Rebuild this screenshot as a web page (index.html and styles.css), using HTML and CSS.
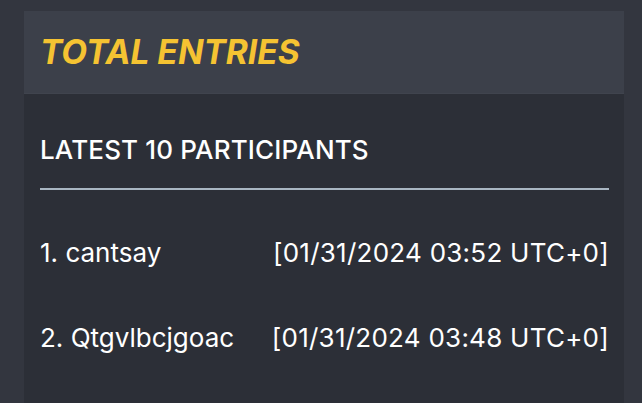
FILE: index.html
```html
<!DOCTYPE html>
<html lang="en">
<head>
    <meta charset="UTF-8">
    <meta name="viewport" content="width=device-width, initial-scale=1.0">
    <title>Total Entries</title>
    <link rel="stylesheet" href="styles.css">
</head>
<body>
    <div class="card">
        <div class="card-header">
            <h1 class="title">TOTAL ENTRIES</h1>
        </div>
        <div class="card-body">
            <h2 class="subtitle">LATEST 10 PARTICIPANTS</h2>
            <ul class="entries">
                <li class="entry">
                    <span class="name">1. cantsay</span>
                    <span class="time">[01/31/2024 03:52 UTC+0]</span>
                </li>
                <li class="entry">
                    <span class="name">2. Qtgvlbcjgoac</span>
                    <span class="time">[01/31/2024 03:48 UTC+0]</span>
                </li>
            </ul>
        </div>
    </div>
</body>
</html>
```

FILE: styles.css
```css
body {
    font-family: Inter, "Noto Sans", sans-serif;
    margin: 0;
    background: #33363f;
    color: #ffffff;
    height: 403px;
    overflow: hidden;
}

.card {
    margin: 11px 18px 0 24px;
    background: #2c2f37;
    min-height: 392px;
}

.card-header {
    background: #3c404a;
    height: 83px;
    padding: 0 16px;
    display: flex;
    align-items: center;
    border-bottom: 1px solid #40444e;
    box-sizing: border-box;
}

.title {
    margin: 0;
    font-size: 33.5px;
    font-style: italic;
    font-weight: 700;
    color: #f5c332;
}

.card-body {
    padding: 0 15px 0 16px;
}

.subtitle {
    margin: 0;
    padding: 40px 0 22px;
    font-size: 26px;
    font-weight: 500;
    line-height: 32px;
    letter-spacing: 0.15px;
    border-bottom: 2px solid #a9b6c2;
}

.entries {
    list-style: none;
    margin: 0;
    padding: 47px 0 0;
    display: flex;
    flex-direction: column;
    gap: 53px;
}

.entry {
    display: flex;
    justify-content: space-between;
    font-size: 26px;
    line-height: 32px;
}

.time {
    letter-spacing: 0.25px;
}
```
